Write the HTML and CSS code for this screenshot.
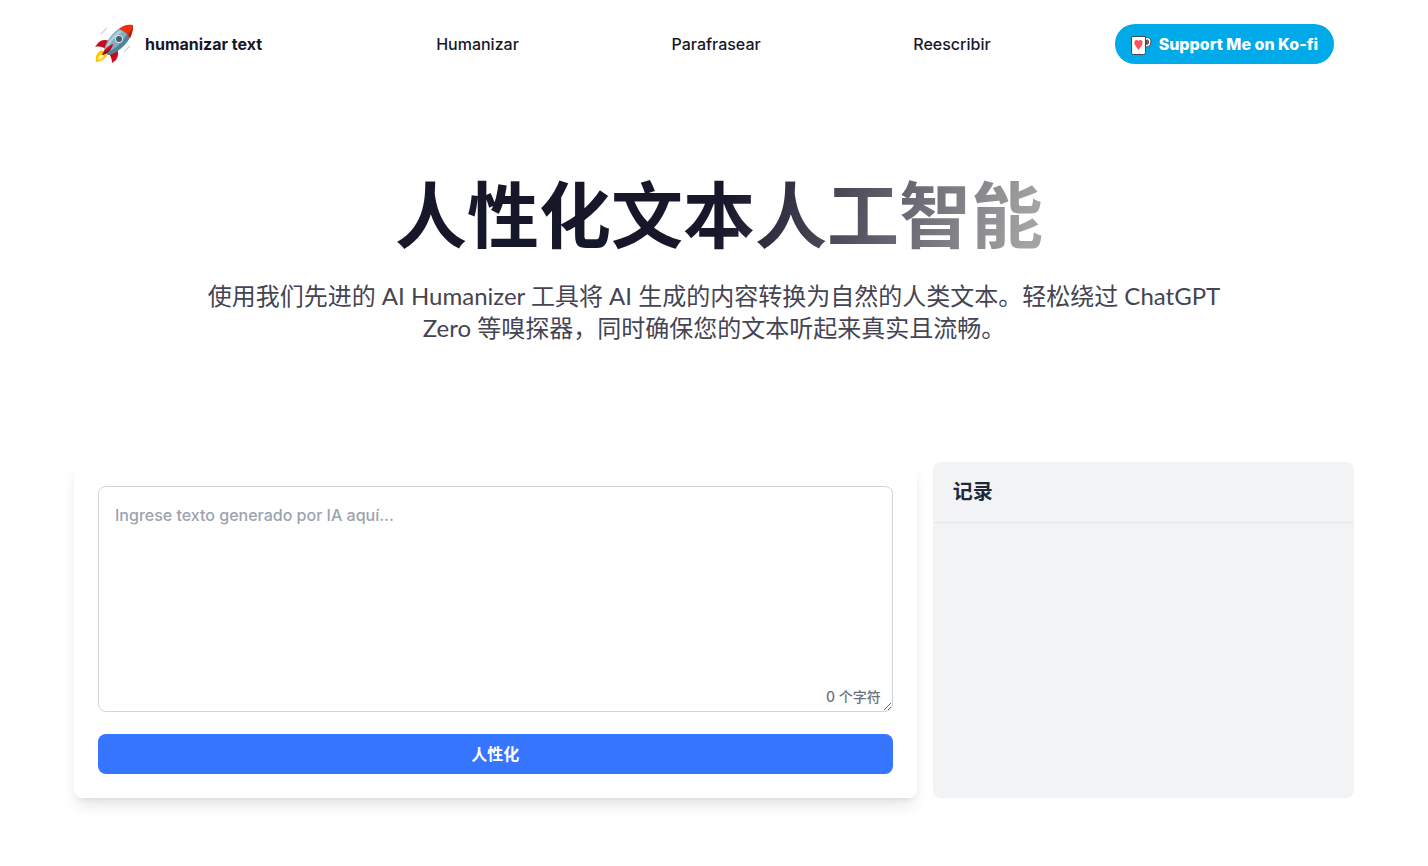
FILE: index.html
```html
<!DOCTYPE html>
<html lang="zh-CN">
<head>
	<meta charset="UTF-8">
	<meta name="viewport" content="width=device-width, initial-scale=1">
	<title>humanizar text</title>
	<link rel="stylesheet" href="styles.css">
</head>
<body>
	<header class="header">
		<a href="#" class="logo">
			<svg class="logo-icon" viewBox="0 0 40 40" aria-hidden="true">
				<path d="M7 10l6-6M30 28l6-6" stroke="#cfd4d8" stroke-width="1.2"/>
				<path d="M8 26C3 28 1 32 2 38c5 0 9-3 11-7z" fill="#fdc70c"/>
				<path d="M8 30c-3 1-4 3-4 6 3 0 5-2 6-4z" fill="#fff176"/>
				<path d="M16 17c-6-2-9-1-12 2l-3 4c4-1 8 0 11 2z" fill="#c40c1c"/>
				<path d="M23 24c2 5 1 9-1 12l-4 3c0-4-1-7-4-10z" fill="#c40c1c"/>
				<path d="M10 27c1-9 9-20 18-24l9 8c-4 10-14 18-23 20z" fill="#82aebf"/>
				<path d="M37 11c-4 10-14 18-23 20l-2-2c10-4 18-12 22-21z" fill="#4f8396"/>
				<path d="M12 23c3-7 8-13 14-17l2 2c-6 4-11 9-14 15z" fill="#b2d0da"/>
				<path d="M25 5c4-4 9-5 14-4 0 5-1 9-3 13-3-5-6-7-11-9z" fill="#ef3009"/>
				<path d="M39 1c0 5-1 9-3 13l-2-3c2-3 4-6 5-10z" fill="#b81b10"/>
				<circle cx="25" cy="15" r="4" fill="#d8e4e8"/>
				<circle cx="25" cy="15" r="3" fill="#435f70"/>
				<path d="M19 20c-5 2-9 5-11 11 5-1 9-4 11-11z" fill="#d50f23"/>
				<path d="M19 20c-2 7-6 10-11 11l2-3c4-2 7-4 9-8z" fill="#920e1b"/>
			</svg>
			<span>humanizar text</span>
		</a>
		<nav class="nav">
			<a href="#">Humanizar</a>
			<a href="#">Parafrasear</a>
			<a href="#">Reescribir</a>
		</nav>
		<a href="#" class="kofi">
			<svg class="kofi-icon" viewBox="0 0 21 23" aria-hidden="true">
				<path d="M14 4.500h2.500q3.500 0 3.500 4.500t-4 5h-2z" fill="#fff" stroke="#454b54"/>
				<path d="M15.500 7h1q1 0 1 2t-1.500 2.500h-.5z" fill="#00a9e8" stroke="#454b54"/>
				<path d="M.5 3.500h14v16q0 2-2 2h-10q-2 0-2-2z" fill="#fff" stroke="#454b54"/>
				<path d="M7.500 17L4 12C2 8 5.500 5.500 7.500 8C9.500 5.500 13 8 11 12z" fill="#ff4f5e"/>
			</svg>
			<span>Support Me on Ko-fi</span>
		</a>
	</header>

	<main>
		<section class="hero">
			<h1 class="title"><span>人性化文本人工智能</span></h1>
			<p class="subtitle">使用我们先进的 AI Humanizer 工具将 AI 生成的内容转换为自然的人类文本。轻松绕过 ChatGPT Zero 等嗅探器，同时确保您的文本听起来真实且流畅。</p>
		</section>

		<div class="panels">
			<form class="card">
				<div class="field">
					<textarea class="input" aria-label="Texto" placeholder="Ingrese texto generado por IA aquí..."></textarea>
					<span class="counter">0 个字符</span>
				</div>
				<button type="button" class="submit">人性化</button>
			</form>
			<aside class="history">
				<h2>记录</h2>
			</aside>
		</div>
	</main>
</body>
</html>
```

FILE: styles.css
```css
* {
	box-sizing: border-box;
}
body {
	margin: 0;
	background: #fff;
	color: #17172a;
	font-family: Inter, "Noto Sans CJK SC", sans-serif;
	font-size: 16px;
	font-weight: 500;
	line-height: 24px;
}
a {
	color: inherit;
	text-decoration: none;
}

/* ----- HEADER ----- */
.header {
	display: flex;
	align-items: center;
	max-width: 1280px;
	margin: 0 auto;
	padding: 24px 20px;
}
.logo {
	display: flex;
	align-items: center;
	gap: 11px;
	font-weight: 700;
}
.logo-icon {
	width: 40px;
	height: 40px;
}
.nav {
	display: flex;
	flex: 1;
	justify-content: space-between;
	padding: 0 124px 0 174px;
}
.kofi {
	display: flex;
	align-items: center;
	gap: 7px;
	height: 40px;
	padding: 0 16px;
	border-radius: 20px;
	background: #00a9e8;
	color: #fff;
	font-weight: 800;
}
.kofi-icon {
	width: 21px;
	height: 23px;
}

/* ----- HERO ----- */
.hero {
	max-width: 1056px;
	margin: 0 auto;
	padding: 92px 16px 118px;
	text-align: center;
}
.title {
	margin: 0 0 28px;
	padding-left: 10px;
	font-size: 72px;
	font-weight: 700;
	line-height: 72px;
}
.title span {
	display: inline-block;
	background: linear-gradient(105deg, #17172a 50%, #5b5966 73%, #a3a3a3 97%);
	background-clip: text;
	-webkit-background-clip: text;
	color: transparent;
}
.subtitle {
	margin: 0;
	color: #454453;
	font-family: Lato, "Noto Sans CJK SC", sans-serif;
	font-size: 24px;
	font-weight: 400;
	line-height: 32px;
}

/* ----- PANELS ----- */
.panels {
	display: grid;
	grid-template-columns: 2fr 1fr;
	gap: 16px;
	max-width: 1280px;
	margin: 0 auto 68px;
}
.card {
	display: flex;
	flex-direction: column;
	gap: 22px;
	padding: 24px;
	border-radius: 8px;
	background: #fff;
	box-shadow: 0 10px 15px -3px rgba(0,0,0,0.1), 0 4px 6px -4px rgba(0,0,0,0.1);
}
.field {
	position: relative;
}
.input {
	display: block;
	width: 100%;
	height: 226px;
	padding: 16px;
	border: 1px solid #d1d5db;
	border-radius: 8px;
	background: #fff;
	color: inherit;
	font: inherit;
	resize: vertical;
}
.input::placeholder {
	color: #9ca3af;
}
.counter {
	position: absolute;
	right: 12px;
	bottom: 5px;
	color: #6b7280;
	font-size: 14px;
	line-height: 20px;
}
.submit {
	height: 40px;
	border: 0;
	border-radius: 8px;
	background: #3575ff;
	color: #fff;
	font: inherit;
	font-weight: 700;
	cursor: pointer;
}
.history {
	border-radius: 8px;
	background: #f2f3f5;
}
.history h2 {
	margin: 0;
	padding: 16px 20px;
	border-bottom: 1px solid #e5e7eb;
	color: #1f2937;
	font-size: 20px;
	font-weight: 700;
	line-height: 28px;
}
```
